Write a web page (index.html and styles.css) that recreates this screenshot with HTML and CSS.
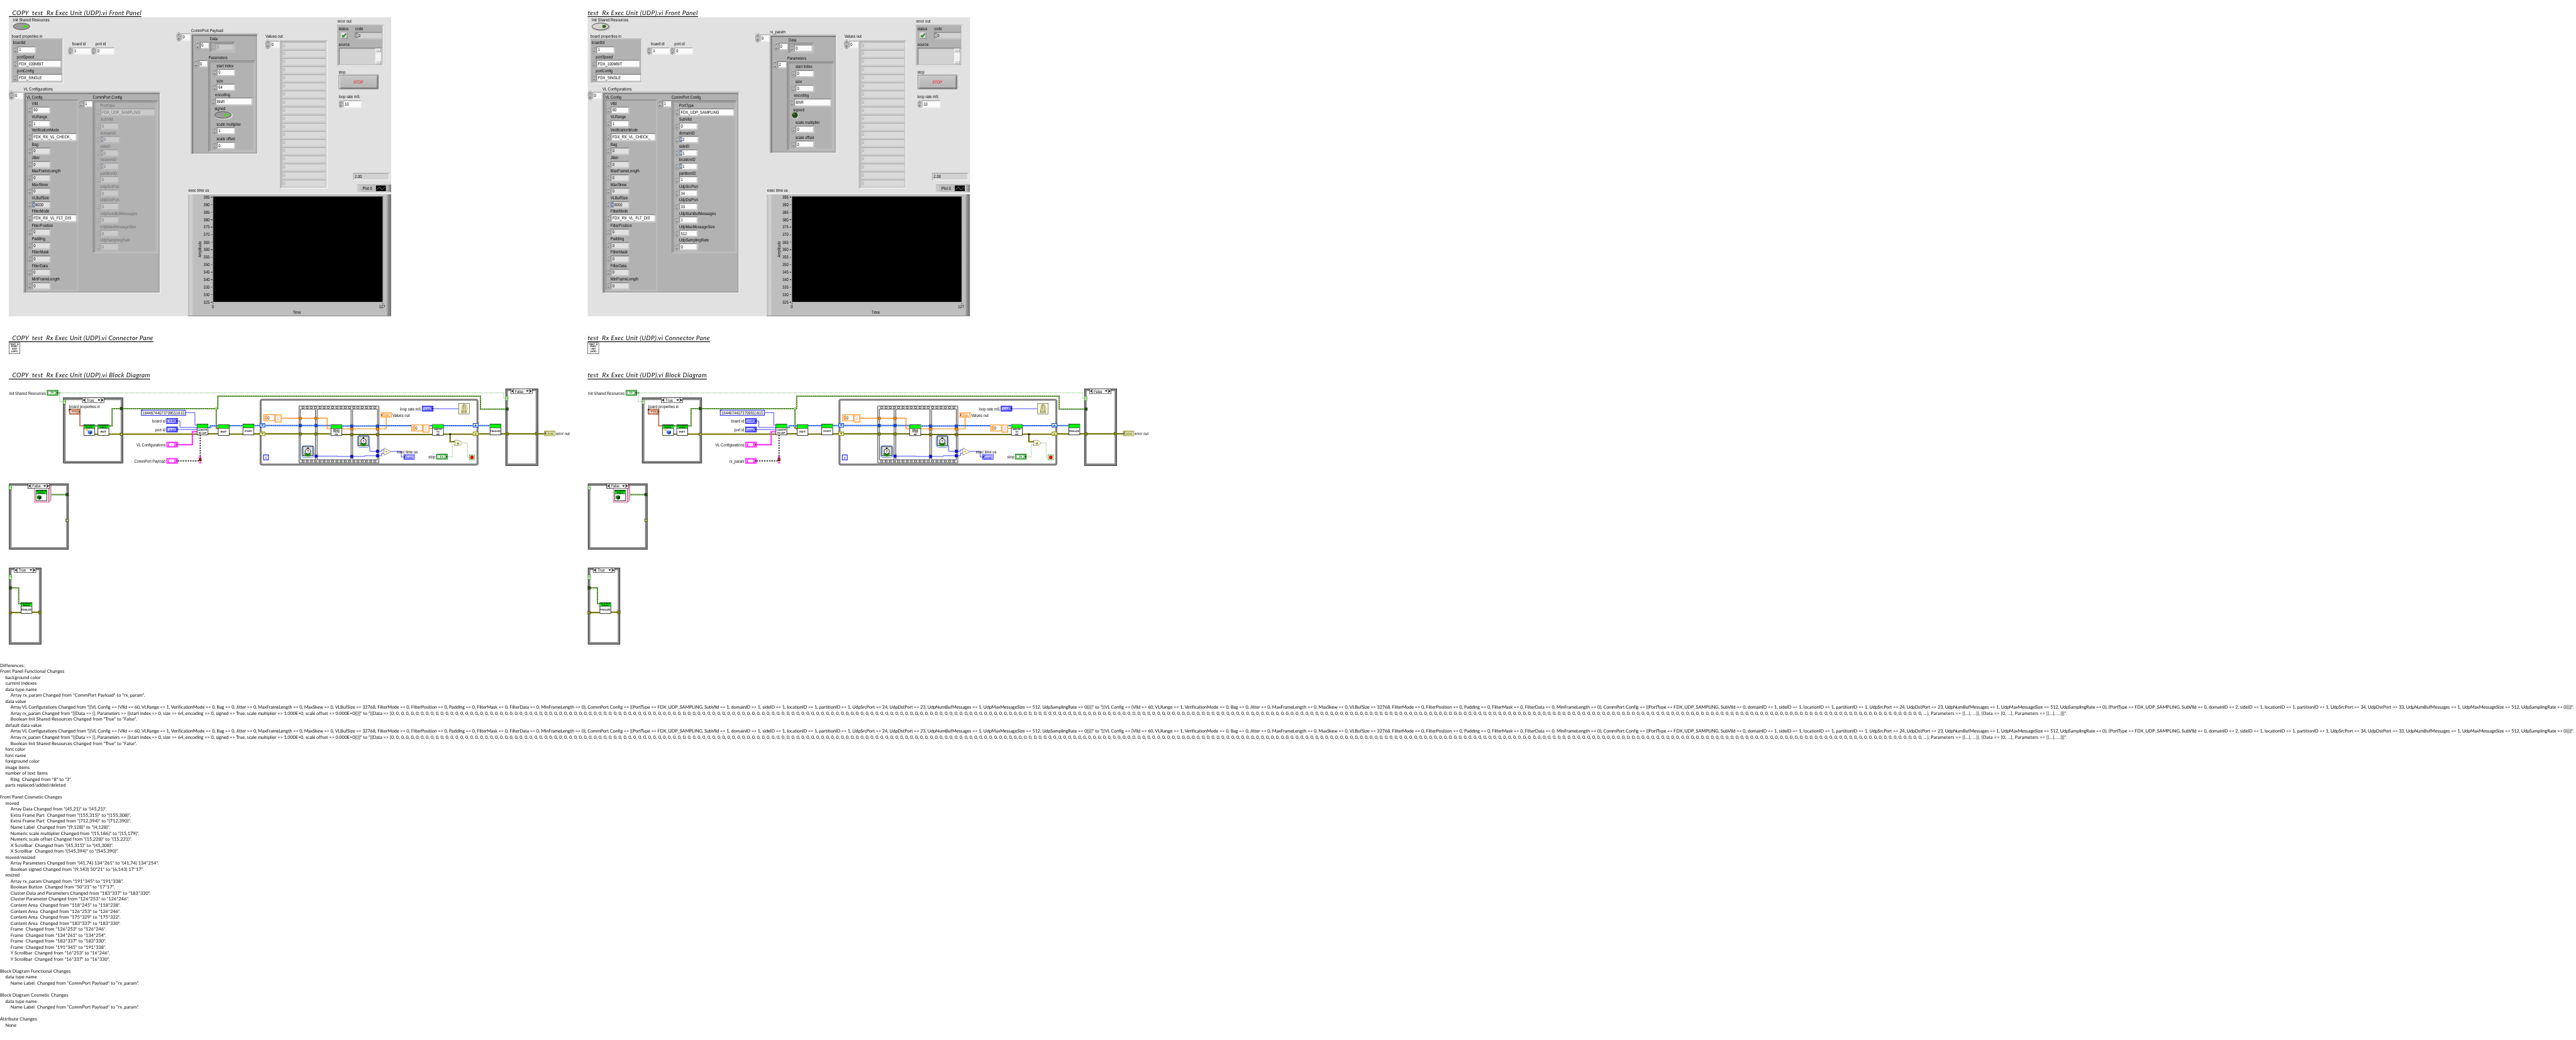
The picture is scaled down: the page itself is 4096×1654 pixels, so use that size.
FILE: index.html
```html
<!DOCTYPE html>
<html lang="en">
<head>
<meta charset="utf-8">
<title>VI comparison report</title>
<link rel="stylesheet" href="styles.css">
</head>
<body>
<div class="window">
<main class="sheet">
  <div class="columns">
    <section class="vi">
      <h2 class="t-front" data-width="376">  COPY  test  Rx Exec Unit (UDP).vi Front Panel</h2>
      <div class="panel" data-vi="copy"></div>
      <h2 class="t-next" data-width="409.6">  COPY  test  Rx Exec Unit (UDP).vi Connector Pane</h2>
      <div class="connector"><span>TEST_R</span><span>EXEC</span><span>UNIT</span><span>(UDP)</span></div>
      <h2 class="t-next" data-width="400.7">  COPY  test  Rx Exec Unit (UDP).vi Block Diagram</h2>
      <div class="diagram" data-vi="copy"></div>
    </section>
    <section class="vi">
      <h2 class="t-front" data-width="313">test  Rx Exec Unit (UDP).vi Front Panel</h2>
      <div class="panel" data-vi="orig"></div>
      <h2 class="t-next" data-width="346.6">test  Rx Exec Unit (UDP).vi Connector Pane</h2>
      <div class="connector"><span>TEST_R</span><span>EXEC</span><span>UNIT</span><span>(UDP)</span></div>
      <h2 class="t-next" data-width="337.7">test  Rx Exec Unit (UDP).vi Block Diagram</h2>
      <div class="diagram" data-vi="orig"></div>
    </section>
  </div>
  <div class="diff">
    <p>Differences:</p>
    <p>Front Panel Functional Changes</p>
    <p class="l1">background color</p>
    <p class="l1">current indexes</p>
    <p class="l1">data type name</p>
    <p class="l2">Array rx_param Changed from "CommPort Payload" to "rx_param".</p>
    <p class="l1">data value</p>
    <p class="l2 long-vl"></p>
    <p class="l2 long-rx"></p>
    <p class="l2">Boolean Init Shared Resources Changed from "True" to "False".</p>
    <p class="l1">default data value</p>
    <p class="l2 long-vl"></p>
    <p class="l2 long-rx"></p>
    <p class="l2">Boolean Init Shared Resources Changed from "True" to "False".</p>
    <p class="l1">font color</p>
    <p class="l1">font name</p>
    <p class="l1">foreground color</p>
    <p class="l1">image items</p>
    <p class="l1">number of text items</p>
    <p class="l2">Ring  Changed from "8" to "3".</p>
    <p class="l1">parts replaced/added/deleted</p>
    <p class="gap">Front Panel Cosmetic Changes</p>
    <p class="l1">moved</p>
    <p class="l2">Array Data Changed from "(45,21)" to "(45,21)".</p>
    <p class="l2">Extra Frame Part  Changed from "(155,315)" to "(155,308)".</p>
    <p class="l2">Extra Frame Part  Changed from "(712,394)" to "(712,390)".</p>
    <p class="l2">Name Label  Changed from "(9,128)" to "(4,128)".</p>
    <p class="l2">Numeric scale multiplier Changed from "(15,186)" to "(15,179)".</p>
    <p class="l2">Numeric scale offset Changed from "(15,228)" to "(15,221)".</p>
    <p class="l2">X Scrollbar  Changed from "(45,315)" to "(45,308)".</p>
    <p class="l2">X Scrollbar  Changed from "(545,394)" to "(545,390)".</p>
    <p class="l1">moved/resized</p>
    <p class="l2">Array Parameters Changed from "(41,74) 134*261" to "(41,74) 134*254".</p>
    <p class="l2">Boolean signed Changed from "(9,143) 50*21" to "(6,143) 17*17".</p>
    <p class="l1">resized</p>
    <p class="l2">Array rx_param Changed from "191*345" to "191*338".</p>
    <p class="l2">Boolean Button  Changed from "50*21" to "17*17".</p>
    <p class="l2">Cluster Data and Parameters Changed from "183*337" to "183*330".</p>
    <p class="l2">Cluster Parameter Changed from "126*253" to "126*246".</p>
    <p class="l2">Content Area  Changed from "118*245" to "118*238".</p>
    <p class="l2">Content Area  Changed from "126*253" to "126*246".</p>
    <p class="l2">Content Area  Changed from "175*329" to "175*322".</p>
    <p class="l2">Content Area  Changed from "183*337" to "183*330".</p>
    <p class="l2">Frame  Changed from "126*253" to "126*246".</p>
    <p class="l2">Frame  Changed from "134*261" to "134*254".</p>
    <p class="l2">Frame  Changed from "183*337" to "183*330".</p>
    <p class="l2">Frame  Changed from "191*345" to "191*338".</p>
    <p class="l2">Y Scrollbar  Changed from "16*253" to "16*246".</p>
    <p class="l2">Y Scrollbar  Changed from "16*337" to "16*330".</p>
    <p class="gap">Block Diagram Functional Changes</p>
    <p class="l1">data type name</p>
    <p class="l2">Name Label  Changed from "CommPort Payload" to "rx_param".</p>
    <p class="gap">Block Diagram Cosmetic Changes</p>
    <p class="l1">data type name</p>
    <p class="l2">Name Label  Changed from "CommPort Payload" to "rx_param".</p>
    <p class="gap">Attribute Changes</p>
    <p class="l1">None</p>
  </div>
</main>
</div>
<script src="app.js"></script>
</body>
</html>
```

FILE: styles.css
```css
* { box-sizing: border-box; }
body { margin: 0; background: #fff; }
.window { width: 4096px; height: 1654px; overflow: hidden; contain: strict; }
.sheet {
  width: 7303px; height: 2949px; overflow: hidden;
  transform: scale(.56086); transform-origin: 0 0;
  text-rendering: geometricPrecision; color: #000;
}
.columns { display: flex; padding: 22px 0 0 25px; }
.vi { width: 1641px; display: flex; flex-direction: column; align-items: flex-start; }

h2 {
  margin: 0; height: 26px; border-bottom: 2px solid #000;
  font: italic 400 18px/26px Lato, sans-serif; white-space: pre;
}
.t-front { margin-bottom: 1px; }
.t-next { margin-top: 47px; margin-bottom: 1px; }
.connector {
  width: 32px; height: 32px; border: 1.5px solid #000; padding-top: 1px;
  display: flex; flex-direction: column; align-items: center;
  font: 700 6.4px/7.1px "Liberation Sans", sans-serif;
}
.diagram { height: 760px; }
.diagram svg { display: block; width: 1616px; height: 760px; overflow: visible; margin-top: 3px; }

/* front panel: controls sit on a free canvas */
.panel {
  position: relative; width: 1084px; height: 848px; background: #e1e1e1; overflow: hidden;
  font: 12.6px/16px "Liberation Sans", sans-serif;
}
.at { position: absolute; }
.t { display: block; height: 16px; white-space: pre; transform: scaleX(.83); transform-origin: 0 50%; }
.box {
  display: flex; align-items: center; height: 21px; width: 53px; flex: none;
  border: 3px solid; border-color: #868686 #c3c3c3 #c3c3c3 #909090; background: #fbfbfb; padding-left: 2px;
}
.box.lt { border-color: #b0b0b0 #f0f0f0 #f0f0f0 #b8b8b8; }
.box.gray { background: #e1e1e1; }
.radix { align-self: stretch; width: 6px; margin: 0 1px 0 -2px; background: #6b7fa3; color: #fff; font-size: 9px; line-height: 15px; text-align: center; flex: none; }
.spin { display: block; width: 12px; height: 22px; flex: none; }
.row { display: flex; align-items: center; }
.field { height: 38px; }
.field > .t { margin-left: 12px; }
.field.enum { height: 40px; }
.field.enum .box { height: 23px; }
.index { display: flex; align-items: center; }
.index .spin { width: 14px; height: 27px; }
.index .box { width: 27px; height: 21px; padding-left: 1px; }
.cluster { border: 3px solid; border-color: #bdbdbd #f0f0f0 #f0f0f0 #bdbdbd; background: #b2b2b2; }
.array { border: 3px solid; border-color: #bcbcbc #f0f0f0 #f0f0f0 #bcbcbc; background: #b2b2b2; box-shadow: inset 5px 5px 0 -1px #808080, inset -4px -4px 0 #a9a9a9; }
.array.in { border-color: #8e8e8e #c0c0c0 #c0c0c0 #8e8e8e; box-shadow: inset 4px 4px 0 #9b9b9b, inset -4px -4px 0 #b8b8b8; }
.sub { border: 3px solid; border-color: #8e8e8e #bebebe #bebebe #9c9c9c; }
.dim { opacity: .42; }
.dim .box { background: #ececec; }
.values { border: 3px solid; border-color: #b5b5b5 #f0f0f0 #f0f0f0 #b5b5b5; background: #cfcfcf; padding: 0 1px; }
.values .box { width: 100%; height: 21.5px; margin-bottom: 1.5px; background: #dadada; color: #9a9a9a; border-color: #b4b4b4 #cdcdcd #cdcdcd #b4b4b4; }
.rocker, .led { display: block; }
.status { display: flex; border: 2px solid; border-color: #ccc #7b7b7b #7b7b7b #ccc; background: #e0e0e0; }
.source { border: 3px solid; border-color: #868686 #c3c3c3 #c3c3c3 #868686; background: #d2d2d2; display: flex; justify-content: flex-end; }
.scroll { width: 16px; display: flex; flex-direction: column; justify-content: space-between; background: #f3f3f3; margin-right: 1px; }
.scroll b { height: 10px; background: #e4e4e4; border: 1px solid; border-color: #fff #777 #777 #fff; font: 6px/8px "DejaVu Sans", sans-serif; text-align: center; color: #888; }
.stop {
  display: flex; align-items: center; justify-content: center; color: #f01018;
  border: 1.5px solid #3c3c3c; background: linear-gradient(#c8c8c8, #b4b4b4);
  box-shadow: inset 4px 3px 0 #d0d0d0, inset -4px -4px 0 #868686;
}
.stop .t, .mid .t { transform-origin: 50% 50%; }
.legend { display: flex; align-items: center; padding-left: 16px; background: linear-gradient(90deg, #cfcfcf, #bebebe 15%, #bebebe 88%, #777); border-top: 1px solid #999; }
.graph { background: linear-gradient(90deg, #bdbdbd 0, #d4d4d4 1.5%, #bebebe 2.8%, #bebebe 97.6%, #8d8d8d 98.6%, #6f6f6f 100%); border-top: 3px solid #efefef; border-bottom: 2px solid #8a8a8a; }
.plot { background: #000; border: 1px solid; border-color: #777 #eee #eee #777; }
.ticks { display: flex; flex-direction: column; justify-content: space-between; }
.ticks span:not(.t) { display: flex; align-items: center; justify-content: space-between; height: 16px; }
.ticks i { width: 5px; height: 1.4px; background: #000; }
.tk { background: #000; }
.mid { display: flex; justify-content: center; }
.turn { transform: rotate(-90deg); }

/* textual report */
.diff { margin-top: 41px; font: 13px/17px Lato, sans-serif; }
.diff p { margin: 0; height: 17px; white-space: pre; width: max-content; }
.diff .l1 { padding-left: 15px; }
.diff .l2 { padding-left: 30px; }
.diff .gap { margin-top: 17px; }
.diff span { display: inline-block; }

svg text { font-family: "Liberation Sans", sans-serif; font-size: 12.4px; }
```

FILE: app.js
```js
/* ---------- front panel ---------- */
const at = (x, y, html, w, h, cls = '') =>
  `<div class="at ${cls}" style="left:${x}px;top:${y}px${w ? `;width:${w}px` : ''}${h ? `;height:${h}px` : ''}">${html}</div>`;
const t = s => `<span class="t">${s}</span>`;
const label = (x, cy, s) => at(x, cy - 8, t(s));
const spin = `<svg class="spin" viewBox="0 0 12 22" preserveAspectRatio="none"><ellipse cx="6" cy="11" rx="5.4" ry="10.6" fill="#bdbdbd" stroke="#7e7e7e" stroke-width=".9"/><path d="M2 5Q5 0 8 2" stroke="#eee" fill="none"/><path d="M0 11H12" stroke="#7a7a7a"/><path d="M0 12H12" stroke="#e6e6e6" stroke-width=".8"/><path d="M4 8L6 4L8 8M4 14.5H8L6 18Z" fill="none" stroke="#444" stroke-width=".9"/></svg>`;
const box = (v, o = {}) => `<div class="box ${o.c || ''}" style="${o.w ? `width:${o.w}px;` : ''}${o.h ? `height:${o.h}px` : ''}">${o.r ? `<span class="radix">${o.r}</span>` : ''}${t(v)}</div>`;
const field = (name, v, o = {}) =>
  `<div class="field ${o.enum ? 'enum' : ''}">${t(name)}<div class="row">${spin}${box(v, o)}</div></div>`;
const index = (x, y, v, c = '') => at(x, y, spin + box(v, { c }), 0, 0, 'index');
const rocker = (on) => `<svg class="rocker" width="56" height="26" viewBox="0 0 56 26"><ellipse cx="28" cy="13.4" rx="26" ry="12" fill="${on ? '#f2f2f2' : '#9a9a9a'}" opacity=".6"/><ellipse cx="26" cy="12" rx="23.6" ry="9.4" fill="${on ? '#9b9b9b' : '#d6d6cf'}" stroke="#4a4a4a" stroke-width="1.6"/><path d="M${on ? '32 7L45 11.5V12.5L32 17Z' : '32 8H40Q45 12 40 16H32Z'}" fill="${on ? '#3fe010' : '#2f6418'}"/></svg>`;

function panel(copy) {
  const g = { c: 'gray' };
  const vl = [['Vlld', '60'], ['VLRange', '1'], ['VerificationMode', 'FDX_RX_VL_CHECK_', { enum: 1, w: 128 }],
    ['Bag', '0', g], ['Jitter', '0', g], ['MaxFrameLength', '0', g], ['MaxSkew', '0', g], ['VLBufSize', '8000', { c: 'gray', r: 'x' }],
    ['FilterMode', 'FDX_RX_VL_FLT_DIS', { enum: 1, w: 128 }], ['FilterPosition', '0', g], ['Padding', '0', g],
    ['FilterMask', '0', g], ['FilterData', '0', g], ['MinFrameLength', '0', g]];
  const v = copy ? Array(10).fill('0') : ['0', '2', '1', '1', '1', '34', '33', '1', '512', '0'];
  const names = ['SubVlld', 'domainID', 'sideID', 'locationID', 'partitionID', 'UdpSrcPort', 'UdpDstPort', 'UdpNumBufMessages', 'UdpMaxMessageSize', 'UdpSamplingRate'];
  const cp = field('PortType', 'FDX_UDP_SAMPLING', { enum: 1, w: 157 }) +
    names.map((n, i) => field(n, v[i], { r: i > 0 && i < 4 ? 'd' : '', w: i === 1 ? 56 : 53 })).join('');
  const d = copy ? 0 : 3, e = copy ? 0 : -4;
  let h = label(12, 8, 'Init Shared Resources') + at(10, 13.5, rocker(copy));
  h += label(7.5, 54, 'board properties in') + at(7.5, 60, '', 147, 128, 'cluster');
  h += label(12, 72, 'boardId') + label(22.5, 112, 'portSpeed') + label(22.5, 152, 'portConfig');
  h += at(11.5, 81, spin + box('1'), 0, 0, 'row') + at(11.5, 120, spin + box('FDX_100MBIT', { w: 125, h: 23 }), 0, 0, 'row') + at(11.5, 160, spin + box('FDX_SINGLE', { w: 128, h: 23 }), 0, 0, 'row');
  h += at(168, 68, field('board id', '1', { c: 'lt' })) + at(234, 68, field('port id', '0', { c: 'lt' }));
  h += label(42, 204, 'VL Configurations') + index(0, 208, '0', 'lt');
  h += at(41, 211, '', 389.5, 572.5, 'array') + label(50, 227, 'VL Config');
  h += at(50, 233, '', 147, 543, 'sub') + at(53, 236, vl.map(f => field(...f)).join(''));
  h += label(238, 227, 'CommPort Config') + index(197.5, 231.5, '1');
  h += at(238, 234.5, '', 185, 434, 'array in') + at(246.5, 241.5, cp, 0, 0, copy ? 'dim' : '');
  /* payload array */
  h += label(516.6, 38 + d, copy ? 'CommPort Payload' : 'rx_param') + index(475, 42 + d, '0', 'lt');
  h += at(516, 45.5 + d, '', 190.5, copy ? 344 : 338, 'array');
  h += label(570, 61 + d, 'Data') + index(528, 65.5 + d, '0') + at(569, 69 + d, '', 72.5, 30.5, 'array in');
  h += at(573, 73 + d, spin + box('0'), 0, 0, copy ? 'row dim' : 'row');
  h += label(566, 114 + d, 'Parameters') + index(524, 118 + d, copy ? '0' : '2');
  h += at(565, 121.5 + d, '', 134, copy ? 260.5 : 253, 'array in');
  h += at(577, 129 + d, field('start index', '0')) + at(577, 171.5 + d, field('size', copy ? '64' : '0'));
  h += at(573, 211 + d, field('encoding', 'BNR', { enum: 1, w: 106 })) + label(583, 259 + d, 'signed');
  h += copy ? at(581, 265, rocker(1)) : at(577, 267, '<svg class="led" width="22" height="22"><circle cx="11.5" cy="11.5" r="10" fill="#e4e4e4" opacity=".7"/><circle cx="10.5" cy="10.5" r="8" fill="#1d4a0c" stroke="#555"/><circle cx="8.5" cy="8" r="2.6" fill="#4c7a3c"/></svg>');
  h += at(577, 294.5 + e, field('scale multiplier', copy ? '1' : '0')) + at(577, 336.5 + e, field('scale offset', '0'));
  /* values out */
  h += label(728, 54, 'Values out') + index(727, 63, '0', 'lt');
  h += at(768.5, 66, Array(18).fill(box('0')).join(''), 135, 421, 'values');
  /* error out */
  h += label(931.7, 12.4, 'error out') + at(931, 20.5, '', 132, 118, 'cluster');
  h += label(935.4, 33, 'status') + label(981.5, 32, 'code') + label(935.4, 77, 'source');
  h += at(941, 42, '<svg viewBox="0 0 16 16"><path d="M2 9L5 7L6.5 9.5L12 2.5L14 3.5L7 13.5L4 13Z" fill="#12d812" stroke="#000" stroke-width="1"/></svg>', 19, 19, 'status');
  h += at(981, 41, `<div class="box" style="width:78px;height:21px;background:#d2d2d2"><span class="radix" style="background:#8a8a8a">d</span>${t('0')}</div>`);
  h += at(935.4, 86, '<div class="scroll"><b>▴</b><b>▾</b></div>', 123.5, 49.5, 'source');
  h += label(935.4, 155.4, 'stop') + at(935, 163, t('STOP'), 113, 41, 'stop');
  h += label(935.4, 225, 'loop rate mS') + at(935, 234.5, spin + box('10', { c: 'lt', w: 53, h: 22 }), 0, 0, 'row');
  h += at(976, 441, `<div class="box lt" style="width:104px;height:22px;background:#d2d2d2">${t('2.00')}</div>`);
  h += at(987, 474, t('Plot 0'), 97, 21, 'legend') + at(1041, 476.5, '<svg width="28" height="16" style="display:block;background:#000"><path d="M2 12L10 4L17 12L26 4" fill="none" stroke="#fff"/></svg>');
  /* chart */
  h += label(508.7, 491, 'exec time us') + at(508, 499, '', 576, 349, 'graph') + at(578.6, 508, '', 482, 300, 'plot');
  h += at(552, 502, [...Array(15)].map((_, i) => `<span>${t(395 - 5 * i)}<i></i></span>`).join(''), 25, 314, 'ticks');
  h += at(508.5, 650, t('Amplitude'), 66, 16, 'mid turn') + at(569, 813, t('0'), 20, 16, 'mid') + at(1044, 813, t('127'), 30, 16, 'mid') + at(787, 829, t('Time'), 60, 16, 'mid');
  h += at(579, 810, '', 1.3, 4, 'tk') + at(1060, 810, '', 1.3, 4, 'tk');
  return h;
}

/* ---------- block diagram ---------- */
const tx = (x, y, s, w, o = '') => `<text x="${x}" y="${y + 4.4}" ${w ? `textLength="${w}" lengthAdjust="spacingAndGlyphs"` : ''} ${o}>${s}</text>`;
const R = (x, y, w, h, f, s = 'none', sw = 1) => `<rect x="${x}" y="${y}" width="${w}" height="${h}" fill="${f}" stroke="${s}" stroke-width="${sw}"/>`;
const P = (d, s, w = 1.2, o = '') => `<path d="${d}" fill="none" stroke="${s}" stroke-width="${w}" ${o}/>`;
const olive = d => P(d, '#808000', 3.6) + P(d, '#000', 1.6) + P(d, '#ffff00', 1.4, 'stroke-dasharray="1.5 1.5"');
const cls = d => P(d, '#1f4d00', 3.2) + P(d, '#66ff20', 3.2, 'stroke-dasharray="1.4 4.6"') + P(d, '#e8ffd8', 1, 'stroke-dasharray="4 2"');
const blue = d => P(d, '#0046dc', 3.4) + P(d, '#fff', 1.3, 'stroke-dasharray="4 2"');
const wire = d => P(d, '#0000ff', 1.3);
const orange = d => P(d, '#ff8000', 2.2);
const dots = d => P(d, '#008000', 1.1, 'stroke-dasharray="1 1"');
const tun = (cx, cy, c) => R(cx - 4, cy - 4, 8, 8, c, '#444', .8);
const small = (cx, y, s, w, size = 7) => `<text x="${cx}" y="${y}" text-anchor="middle" textLength="${w}" lengthAdjust="spacingAndGlyphs" style="font-size:${size}px;font-weight:700">${s}</text>`;
const node = (x, y, lines, head = '') => {
  let s = R(x + .7, y + .7, 31, 30.6, '#fff', '#000', 1.4) + R(x + 1.4, y + 1.4, 29.6, 9.4, '#00ff00') + P(`M${x} ${y + 11.3}H${x + 32}`, '#000', 1);
  if (head) s += small(x + 16, y + 6, 'SHARED', 28, 5.6) + small(x + 16, y + 10.8, 'RSCS', 19, 5.6);
  const n = lines.length;
  lines.forEach((l, i) => s += small(x + 16, y + (n === 3 ? 16.8 + 6.6 * i : n === 2 ? 19.4 + 8 * i : 23.4), l, Math.min(29, l.replace(' ', '').length * 4.4), n === 3 ? 6.4 : 7));
  return s;
};
const cube = (x, y, a, b, c) => `<path d="M${x} ${y - 7}l6 2.6v7.4l-6 3l-6-3v-7.4z" fill="${b}"/><path d="M${x} ${y - 7}l6 2.6l-6 2.8l-6-2.8z" fill="${a}"/><path d="M${x} ${y - 1.6}l6-2.8v7.4l-6 3z" fill="${c}"/>`;
const term = (x, y, s, c, ind, f = '#fff') => {
  const a = ind ? x + 2.5 : x + 28;
  return R(x + 1, y + 1, 30, 13.6, f, c, ind ? 1.4 : 2.2) + R(x + 4, y + 3.6, 24, 8.4, '#fff', c, .9) + R(ind ? x + 2 : x + 22.5, y + 2.5, 7.5, 10.6, c).replace('/>', ' opacity=".35"/>') +
    `<path d="M${a} ${y + 5}v5.6l2.8-2.8z" fill="#000"/>` +
    `<text x="${x + (ind ? 18 : 15)}" y="${y + 11}" text-anchor="middle" style="font-size:8.6px;font-weight:700" fill="${c}" textLength="${s.length * 5.6}" lengthAdjust="spacingAndGlyphs">${s}</text>`;
};
const cas = (x, y, w, h, v, sx) => R(x + 3.5, y + 3.5, w - 7, h - 7, 'none', '#828282', 5.6) + R(x + .6, y + .6, w - 1.2, h - 1.2, 'none', '#000', 1.2) + R(x + 6.6, y + 6.6, w - 13.2, h - 13.2, 'none', '#777', .7) +
  R(sx, y + .6, 61, 13.4, '#fff', '#000', 1.1) + P(`M${sx + 8} ${y}v14M${sx + 53} ${y}v14`, '#000', 1) +
  `<path d="M${sx + 6.5} ${y + 3}v8l-5-4zM${sx + 54.5} ${y + 3}v8l5-4zM${sx + 43} ${y + 5}h8l-4 4.4z"/>` + tx(sx + 12, y + 7.2, v, v === 'True' ? 21 : 24);
const q = (x, y) => R(x + .5, y, 7, 11.5, '#f4ffd0', '#008000', 1) + `<text x="${x + 4}" y="${y + 9.3}" text-anchor="middle" style="font-size:9.5px" fill="#008000">?</text>`;
const sh = (x, y, c, up) => R(x + 1, y + 1, 14, 10, '#ffffe0', c, 2) + `<path d="${up ? `M${x + 3.5} ${y + 8.5}h9l-4.5-5z` : `M${x + 3.5} ${y + 3.5}h9l-4.5 5z`}" fill="${c}"/>`;
const oconst = (x, y) => R(x + 1, y + 1, 31, 17, '#fff', '#ff8000', 1.8) + R(x + 2.5, y + 2.5, 7, 14, '#ffd9b0') + `<path d="M${x + 6} ${y + 4}l3 4h-6zM${x + 6} ${y + 15}l3-4h-6z" fill="#ff8000"/>` + P(`M${x + 9.5} ${y}v18`, '#ff8000', 1.2) + tx(x + 11, y + 9.4, '0', 6) +
  R(x + 33, y + 1, 17.5, 21, '#fff', '#ff8000', 1.4) + R(x + 35.3, y + 3.4, 13, 16.2, '#fff', '#ffc48a', 2) + tx(x + 38.5, y + 11.8, '0', 6, 'fill="#aaa"');
const watch = (x, y) => R(x + 1, y + .5, 35, 34, '#cfe2fb', '#2a6be0', 1.1).replace('/>', ' rx="7"/>') + R(x + 4, y + 3, 29, 26, '#dcdcdc', '#000', 1.4) +
  `<path d="M${x + 7} ${y + 24}l11 -5l11 5l-11 8z" fill="#109010"/>` + P(`M${x + 9} ${y + 27}v4M${x + 12} ${y + 29}v4M${x + 15} ${y + 30}v4M${x + 21} ${y + 30}v4M${x + 24} ${y + 29}v4M${x + 27} ${y + 27}v4`, '#b0a000', 1) +
  `<circle cx="${x + 18.5}" cy="${y + 17}" r="7.4" fill="#fff" stroke="#000" stroke-width="1.6"/>` + R(x + 16.5, y + 6, 4, 3.4, '#000') + `<text x="${x + 18.5}" y="${y + 20.6}" text-anchor="middle" style="font-size:10px;font-weight:700">?</text>`;

function diagram(copy) {
  const BL = '#0000ff', GR = '#008000', OL = '#808000', OR = '#ff8000', CB = '#0046dc', DG = '#1f4d00', PK = '#ff00ff', BR = '#a04010';
  let s = `<svg viewBox="25 1080 1616 760">`;
  /* structures */
  s += cas(179, 1127.5, 170, 186.5, 'True', 233.6) + cas(1433, 1102, 92.6, 219, 'False', 1448);
  s += `<rect x="739" y="1133.5" width="614.8" height="184" rx="4" fill="none" stroke="#808080" stroke-width="5.6"/>`;
  s += R(847.5, 1151.5, 227, 161, '#e4e4e4', '#000', 1.2);
  for (let i = 0; i < 18; i++) s += R(856.5 + i * 12, 1153.2, 5, 5, '#fff', '#000', 1.1) + R(856.5 + i * 12, 1305.3, 5, 5, '#fff', '#000', 1.1);
  s += R(852, 1160.5, 42, 143, '#fff', '#000', 1.2) + R(899, 1160.5, 96, 143, '#fff', '#000', 1.2) + R(1000, 1160.5, 70, 143, '#fff', '#000', 1.2);
  /* boolean and class wires */
  s += dots('M165 1114H1428V1130H1434') + dots('M168.7 1114V1139H180') + dots('M1268 1295H1282.5V1260H1290') + dots('M1310 1256H1325V1297H1330');
  s += cls('M268 1207.6H277') + cls('M309 1207.6H318V1158.7H612.7') + cls('M612.7 1158.7H617.5V1123.5H1362V1160H1434') + cls('M613 1160V1215H619');
  s += `<circle cx="168.7" cy="1114" r="2" fill="#fff" stroke="${GR}" stroke-width="1.4"/><circle cx="612.7" cy="1158.7" r="2.6" fill="#fff" stroke="#40a000" stroke-width="1.6"/>`;
  /* error wires */
  s += olive('M268 1231H558') + olive('M590 1230H618') + olive('M649 1231H688') + olive('M720 1230.4H737') + olive('M752 1230.4H937') + olive('M969 1232H1225') + olive('M1257 1231.3H1340') + olive('M1356 1230.4H1388') + olive('M1420 1230.4H1543') + olive('M1276 1231.3V1252.7H1290');
  s += '<circle cx="1276" cy="1231.3" r="2.6"/>';
  s += P('M226.5 1174V1207.6H237', BR, 2.6) + P('M226.5 1174V1207.6H237', '#fff', .8, 'stroke-dasharray="1 1"');
  s += wire('M526 1170H552.6V1205.6H558') + wire('M504 1194H510.4V1212H558') + wire('M504 1218H558') + wire('M1228 1159H1300') + wire('M1048.4 1263V1279.7H1066M1074 1279.7H1082V1275.7H1088') + wire('M900 1293.3H956V1294.3H1033.5V1292.3H1082V1285H1088') + wire('M1109 1280H1137.7V1296H1144');
  s += P('M504 1261H545.3V1224H558', PK, 3.4) + P('M504 1261H545.3V1224H558', '#fff', 1, 'stroke-dasharray="2 2"');
  s += P('M504 1307H567.6V1234', '#000', 2.6, 'stroke-dasharray="4 3"');
  s += '<path d="M563 1297h9l-4.5-5zM563 1313.5h9l-4.5-4z" fill="#ff00ff"/>' + P('M564 1300l7 7M571 1300l-7 7', '#000', 3.4) + P('M564 1300l7 7M571 1300l-7 7', '#f01010', 1.8);
  s += blue('M590 1212H596.7V1207.4H618') + blue('M649 1207H688') + blue('M720 1206.7H737') + blue('M752 1206.7H937') + blue('M969 1208H1074') + blue('M1074 1207H1166') + blue('M1217 1207H1225') + blue('M1257 1207H1340') + blue('M1356 1206.7H1388');
  s += orange('M798 1186H927.6V1216H937.5') + orange('M969 1216H1095V1185') + orange('M1217 1215H1225');
  /* labels and terminals */
  s += tx(26, 1115, 'Init Shared Resources', 104) + term(133, 1106, 'TF', GR);
  s += q(179, 1133.7) + tx(196.3, 1152, 'board properties in', 87) + term(196, 1159.5, '906', BR) + '<path d="M195.5 1159v6l6-6z"/>';
  s += node(237, 1203.6, [], 1) + node(277, 1203.6, ['INIT'], 1) + cube(255, 1226, '#8cb8ff', '#3a78e8', '#1b3fa8') + P('M246 1215v9M241.5 1219.5h9M243 1216.5l6 6M249 1216.5l-6 6', '#c0b000', 1);
  s += tun(344.5, 1158.5, DG) + tun(344.5, 1231.5, OL) + R(343, 1230, 3, 3, '#fff');
  s += R(401, 1163, 125, 15, '#fff', BL, 1.6) + '<path d="M400 1162v5l6-5z" fill="#333"/>' + tx(404, 1170.5, '18446744073709551615', 119);
  s += tx(431.5, 1194, 'board id', 37.5) + term(472, 1186, 'U32', BL) + tx(440.5, 1218, 'port id', 28.5) + term(472, 1210, 'U32', BL);
  s += tx(387, 1261, 'VL Configurations', 82.5) + term(472, 1253, '[▫▫]', PK);
  s += (copy ? tx(380.5, 1307, 'CommPort Payload', 88.5) : tx(427, 1307, 'rx_param', 42)) + term(472, 1299, '[▫▫]', PK);
  s += node(558, 1202, ['CONSTR', 'RX UDP']) + node(618, 1203.6, ['INIT']) + node(688, 1202, ['START']) + node(937.5, 1204, ['READ', 'FROM', 'HW']) + node(1225.5, 1203, ['WRITE', 'TO', 'HW']) + node(1388.5, 1202, ['FINALIZE']);
  s += '<path d="M617 1213v5l4-2.5z" fill="#f00"/>';
  s += sh(736, 1200, CB) + sh(736, 1224, OL) + sh(1340.5, 1200, CB, 1) + sh(1340.5, 1224, OL, 1);
  s += oconst(747, 1175) + oconst(1166, 1204);
  s += tun(851.4, 1186.5, OR) + tun(896.4, 1186.5, OR) + tun(997.3, 1216.5, OR) + tun(1070.3, 1216.5, OR);
  s += tun(851.4, 1206.7, CB) + tun(896.4, 1206.7, CB) + tun(997.3, 1208.3, CB) + tun(1070.3, 1208.3, CB);
  s += tun(851.4, 1230.7, OL) + tun(896.4, 1230.7, OL) + tun(997.3, 1232.5, OL) + tun(1070.3, 1232.5, OL);
  s += watch(854.5, 1263) + watch(1012, 1234);
  s += tun(896.4, 1293.3, BL) + tun(997.3, 1294.3, BL) + tun(1070.3, 1279.7, BL) + tun(1070.3, 1292.3, BL);
  s += term(1079, 1169, 'DBL', OR, 1) + tx(1112.5, 1177.5, 'Values out', 49);
  s += tx(1134, 1159.5, 'loop rate mS', 59.5) + term(1196.4, 1151, 'U32', BL);
  s += R(1300.7, 1143.6, 30, 30, '#ffffd8', '#444', 1.2) + '<path d="M1312 1148q3.5-4 7 0l4 22h-15z" fill="#e9e3a0" stroke="#333"/><path d="M1309 1166h13M1315 1148v14" stroke="#333" fill="none"/><path d="M1321 1147l5 15" stroke="#777" fill="none"/>';
  s += '<path d="M1088.5 1270.5L1109 1280.5L1088.5 1290.5Z" fill="#ffffd0" stroke="#444" stroke-width="1"/>' + P('M1093 1280.5h4', '#000', 1.2);
  s += tx(1125.7, 1281, 'exec time us', 58.5) + term(1143.8, 1288, 'U32', BL, 1);
  s += tx(1214.5, 1295.5, 'stop', 20) + term(1237, 1287, 'TF', GR);
  s += '<path d="M1288.5 1248.5H1299Q1307 1250 1310 1256Q1307 1262.5 1299 1263.5H1288.5Q1293 1256 1288.5 1248.5Z" fill="#ffffd0" stroke="#444"/>' + `<text x="1298.5" y="1260" text-anchor="middle" style="font-size:9px;font-weight:700">V</text>`;
  s += R(1330.7, 1289.7, 14.6, 14.6, '#f4f4c0', GR, 1) + '<circle cx="1338" cy="1297" r="4.6" fill="#f00" stroke="#600" stroke-width=".8"/>';
  s += R(747, 1290, 14, 14, '#ffffe0', BL, 1.8) + `<text x="754" y="1301.5" text-anchor="middle" style="font-size:12px;font-weight:700" fill="#00f">i</text>`;
  s += q(1433, 1124) + tun(1437.8, 1160, DG) + tun(1437.8, 1230.5, OL) + tun(1521.6, 1229.5, OL);
  s += term(1542.5, 1221, '906', OL, 1) + tx(1576, 1229.5, 'error out', 39);
  /* other case frames */
  s += cas(25.7, 1371, 169, 187.5, 'False', 79.5) + q(25.7, 1377);
  s += R(97.7, 1381, 40.5, 43, '#fff', '#d0006c', 1.2) + '<path d="M138.5 1381l6-6v43l-6 6z" fill="#ddd" stroke="#d0006c" stroke-width="1.2"/>' + R(79.5, 1371.6, 61, 13.4, '#fff', '#000', 1.1) + P('M87.5 1371v14M132.5 1371v14', '#000', 1) + '<path d="M86 1374v8l-5-4zM134 1374v8l5-4zM122.5 1376h8l-4 4.4z"/>' + tx(91.5, 1378.2, 'False', 24);
  s += node(101, 1389, [], 1) + cube(111, 1411, '#129012', '#0d7a0d', '#002800') + cls('M145 1402.5H187') + tun(190.5, 1402.5, DG) + tun(190.5, 1475.5, OL) + R(189, 1474, 3, 3, '#fff');
  s += cas(25.7, 1609.7, 91.5, 218, 'True', 40.7) + q(25.7, 1631);
  s += cls('M33 1667H53V1712H59') + olive('M33 1737H59') + olive('M91 1736H110') + node(59, 1708, ['FINALIZE'], 1) + tun(29.5, 1667, DG) + tun(29.5, 1737.5, OL) + tun(113.5, 1736.5, OL);
  return s + '</svg>';
}

document.querySelectorAll('.panel').forEach(p => p.innerHTML = panel(p.dataset.vi === 'copy'));
document.querySelectorAll('.diagram').forEach(p => p.innerHTML = diagram(p.dataset.vi === 'copy'));

/* ---------- long report lines ---------- */
const vlc = 'VL Config => {VlId => 60, VLRange => 1, VerificationMode => 0, Bag => 0, Jitter => 0, MaxFrameLength => 0, MaxSkew => 0, VLBufSize => 32768, FilterMode => 0, FilterPosition => 0, Padding => 0, FilterMask => 0, FilterData => 0, MinFrameLength => 0}, CommPort Config => ';
const port = (sub, dom, src, dst) => `{PortType => FDX_UDP_SAMPLING, SubVlId => ${sub}, domainID => ${dom}, sideID => 1, locationID => 1, partitionID => 1, UdpSrcPort => ${src}, UdpDstPort => ${dst}, UdpNumBufMessages => 1, UdpMaxMessageSize => 512, UdpSamplingRate => 0}`;
const run = (w, s) => `<span data-width="${w}">${s.replace(/>/g, '&gt;')}</span>`;
document.querySelectorAll('.long-vl').forEach(p => p.innerHTML =
  run(3079, `Array VL Configurations Changed from "[{${vlc}[${port(1, 1, 24, 23)}]}]" t`) +
  run(4189, `o "[{${vlc}[${port(0, 1, 24, 23)}, ${port(0, 2, 34, 33)}]}]".`));
document.querySelectorAll('.long-rx').forEach(p => p.innerHTML =
  run(1079, 'Array rx_param Changed from "[{Data => [], Parameters => [{start index => 0, size => 64, encoding => 0, signed => True, scale multiplier => 1.000E+0, scale offset => 0.000E+0}]}]" to "[{Data => [') +
  run(4344, '0, '.repeat(310)) + run(408, '...], Parameters => [{...}, ...]}, {Data => [0, ...], Parameters => [{...}, ...]}]".'));

const track = (el, w) => (w - el.offsetWidth) / el.textContent.length;
document.querySelectorAll('[data-width]').forEach(el => el.style.letterSpacing = track(el, +el.dataset.width) + 'px');
const sample = document.querySelector('.diff .l2');
document.querySelector('.diff').style.setProperty('letter-spacing', track(sample, 411) + 'px');
```
